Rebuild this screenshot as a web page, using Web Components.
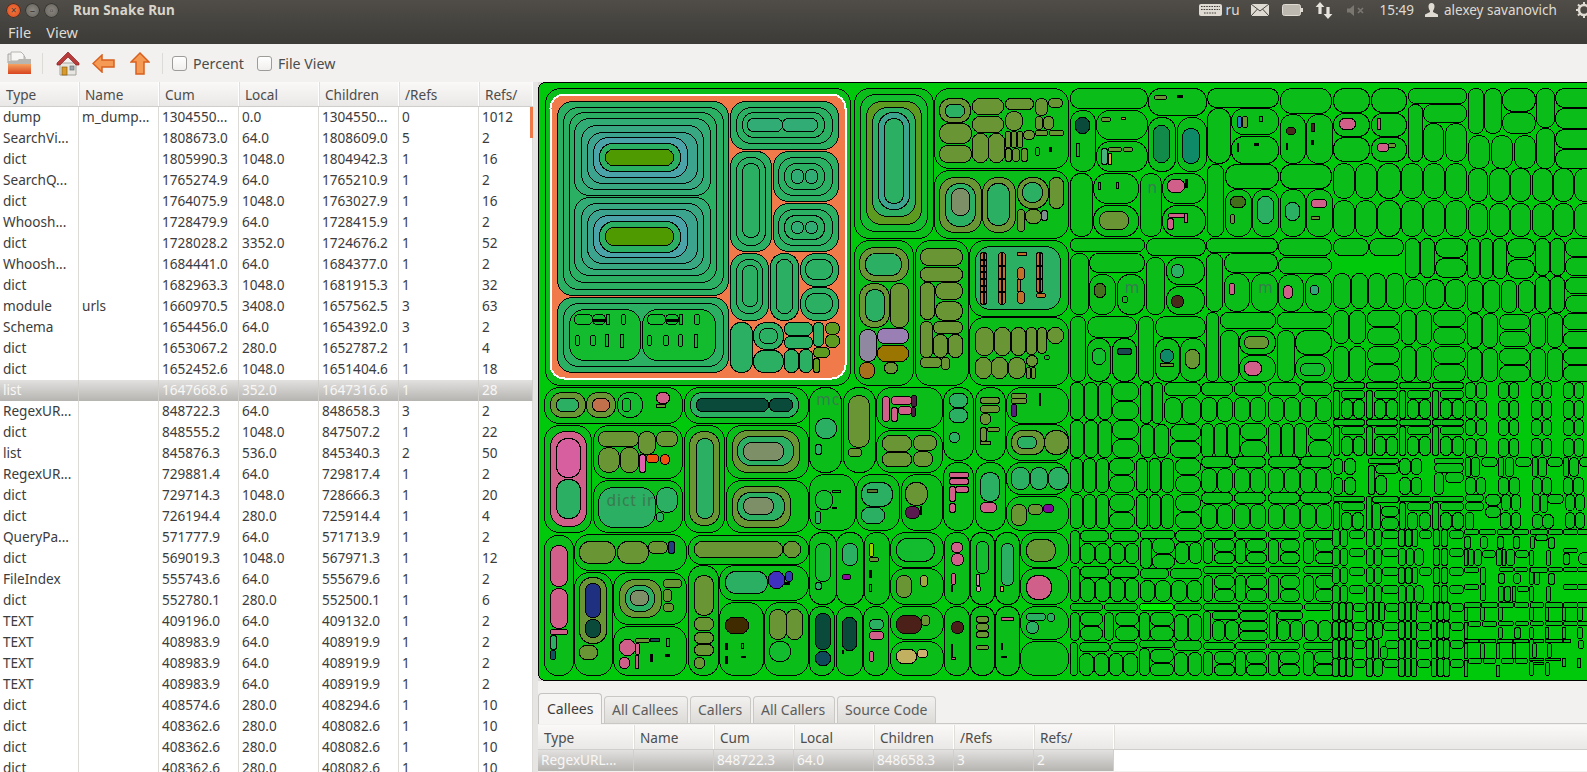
<!DOCTYPE html>
<html>
<head>
<meta charset="utf-8">
<title>Run Snake Run</title>
<style>
  html, body { margin: 0; height: 100%; overflow: hidden; background: #f2f1ef; }
  body { font-family: "Noto Sans", "Open Sans", sans-serif; display: flex; flex-direction: column; height: 772px; }
  .split { display: flex; flex: 1; min-height: 0; }
  .side { display: flex; flex-direction: column; flex: 1; min-width: 0; }
  .sash { flex: 0 0 5px; background: #e6e5e3; }
</style>
</head>
<body>
<top-bar></top-bar>
<tool-bar></tool-bar>
<div class="split">
  <snake-table id="main" style="width:533px" columns="79,80,80,80,80,80,54" indicator></snake-table>
  <div class="sash"></div>
  <div class="side">
    <square-map></square-map>
    <note-tabs>
      <snake-table id="callees" columns="96,80,80,80,80,80,80"></snake-table>
    </note-tabs>
  </div>
</div>

<script>
const HEAD = ["Type", "Name", "Cum", "Local", "Children", "/Refs", "Refs/"];

const MAIN_ROWS = `dump|m_dump...|1304550...|0.0|1304550...|0|1012
SearchVi...||1808673.0|64.0|1808609.0|5|2
dict||1805990.3|1048.0|1804942.3|1|16
SearchQ...||1765274.9|64.0|1765210.9|1|2
dict||1764075.9|1048.0|1763027.9|1|16
Whoosh...||1728479.9|64.0|1728415.9|1|2
dict||1728028.2|3352.0|1724676.2|1|52
Whoosh...||1684441.0|64.0|1684377.0|1|2
dict||1682963.3|1048.0|1681915.3|1|32
module|urls|1660970.5|3408.0|1657562.5|3|63
Schema||1654456.0|64.0|1654392.0|3|2
dict||1653067.2|280.0|1652787.2|1|4
dict||1652452.6|1048.0|1651404.6|1|18
list||1647668.6|352.0|1647316.6|1|28
RegexUR...||848722.3|64.0|848658.3|3|2
dict||848555.2|1048.0|847507.2|1|22
list||845876.3|536.0|845340.3|2|50
RegexUR...||729881.4|64.0|729817.4|1|2
dict||729714.3|1048.0|728666.3|1|20
dict||726194.4|280.0|725914.4|1|4
QueryPa...||571777.9|64.0|571713.9|1|2
dict||569019.3|1048.0|567971.3|1|12
FileIndex||555743.6|64.0|555679.6|1|2
dict||552780.1|280.0|552500.1|1|6
TEXT||409196.0|64.0|409132.0|1|2
TEXT||408983.9|64.0|408919.9|1|2
TEXT||408983.9|64.0|408919.9|1|2
TEXT||408983.9|64.0|408919.9|1|2
dict||408574.6|280.0|408294.6|1|10
dict||408362.6|280.0|408082.6|1|10
dict||408362.6|280.0|408082.6|1|10
dict||408362.6|280.0|408082.6|1|10`;

class TopBar extends HTMLElement {
  constructor() {
    super();
    this.attachShadow({ mode: "open" }).innerHTML = `
      <style>
        :host { display: block; height: 44px; flex: none; background: linear-gradient(#504d48, #3c3b37); color: #dfdbd2; font-size: 14px; }
        .title { display: flex; align-items: center; height: 20px; padding-left: 6px; }
        .btn { width: 15px; height: 15px; border-radius: 50%; margin-right: 4px; display: flex; align-items: center; justify-content: center; font-size: 10px; line-height: 1; color: #3c3b37; background: radial-gradient(#8b8882, #5f5c56); box-shadow: inset 0 0 0 1px #35342f; }
        .btn.close { background: radial-gradient(#f47a3e, #d8431d); }
        .name { font-weight: 700; font-size: 13.5px; margin-left: 10px; letter-spacing: .1px; color: #d8d4cb; }
        .status { margin-left: auto; display: flex; align-items: center; height: 20px; font-size: 13.5px; color: #dfdbd2; }
        .status svg { display: block; flex: none; }
        .menu { display: flex; height: 24px; align-items: center; padding-left: 8px; gap: 15px; font-size: 14.5px; }
      </style>
      <div class="title">
        <span class="btn close">×</span><span class="btn">–</span><span class="btn">▫</span>
        <span class="name">Run Snake Run</span>
        <div class="status">
          <svg width="23" height="12" viewBox="0 0 23 12"><rect width="23" height="12" rx="2" fill="#dfdbd2"/><path d="M2 2.5h19M2 5.5h19M5 9h13" stroke="#3f3d39" stroke-width="1.2" stroke-dasharray="1.6 1"/></svg>
          <span style="margin:0 12px 0 4px">ru</span>
          <svg width="18" height="12" viewBox="0 0 18 12"><rect width="18" height="12" fill="#dfdbd2"/><path d="M0 0l9 7 9-7M0 12l6.5-7M18 12l-6.5-7" fill="none" stroke="#4a4843" stroke-width="1"/></svg>
          <svg style="margin-left:13px" width="21" height="12" viewBox="0 0 21 12"><rect x=".5" y=".5" width="18" height="11" rx="2" fill="#bdb9b0" stroke="#dfdbd2"/><rect x="19" y="4" width="2" height="4" fill="#dfdbd2"/></svg>
          <svg style="margin-left:12px" width="18" height="17" viewBox="0 0 18 17"><path d="M5 0l4.4 5H6.6v7H3.4V5H.6zM13 17l-4.4-5h2.8V5h3.2v7h2.8z" fill="#e6e3dc"/></svg>
          <svg style="margin-left:14px" width="18" height="11" viewBox="0 0 18 11"><path d="M0 3.5h3L7 0v11L3 7.500H0z" fill="#7a7771"/><path d="M11 3l5 5M16 3l-5 5" stroke="#7a7771" stroke-width="1.6"/></svg>
          <span style="margin-left:14px">15:49</span>
          <svg style="margin-left:11px" width="13" height="14" viewBox="0 0 13 14"><path d="M6.5 0c2 0 3 1.5 3 3.5S8.400 7 8 8v1l5 2.500V14H0v-2.500L5 9V8C4.600 7 3.500 5.500 3.500 3.500S4.500 0 6.500 0z" fill="#dfdbd2"/></svg>
          <span style="margin-left:6px;width:132px">alexey savanovich</span>
          <svg width="11" height="16" viewBox="0 0 11 16"><circle cx="8" cy="8" r="5" fill="none" stroke="#dfdbd2" stroke-width="2.600"/><path d="M8 0v3M8 13v3M0 8h3M2 2.500l2 2M2 13.500l2-2" stroke="#dfdbd2" stroke-width="2"/></svg>
        </div>
      </div>
      <div class="menu"><span>File</span><span>View</span></div>`;
  }
}
customElements.define("top-bar", TopBar);

class ToolBar extends HTMLElement {
  constructor() {
    super();
    this.attachShadow({ mode: "open" }).innerHTML = `
      <style>
        :host { display: flex; align-items: center; height: 38px; flex: none; background: #f2f1ef; color: #4c4c4c; font-size: 14.2px; }
        svg { display: block; flex: none; }
        .sep { width: 1px; height: 21px; background: #dcdbd8; flex: none; }
        .chk { width: 13px; height: 13px; border: 1px solid #9d9c99; border-radius: 3px; background: linear-gradient(#fff, #f0efed); flex: none; }
      </style>
      <svg style="margin-left:7px" width="25" height="24" viewBox="0 0 25 24">
        <path d="M1 3h14l3 3v6H1z" fill="#e6e5e2" stroke="#a5a4a0"/><path d="M4 1h10l3 3v6H4z" fill="#f7f6f4" stroke="#b5b4b0"/>
        <path d="M1 10h9l2-2h12v15H1z" fill="#b8b6b1"/><path d="M1 13h23v10H1z" fill="url(#fo)"/>
        <defs><linearGradient id="fo" x2="0" y2="1"><stop offset="0" stop-color="#f5a262"/><stop offset="1" stop-color="#d8431d"/></linearGradient></defs>
      </svg>
      <div class="sep" style="margin-left:10px"></div>
      <svg style="margin-left:13px" width="24" height="25" viewBox="0 0 24 25">
        <path d="M4 12h16v12H4z" fill="#e8e6e1" stroke="#a5a39d"/><rect x="6" y="16" width="5" height="8" fill="#d99a2b" stroke="#8a5d12" stroke-width=".7"/><rect x="14" y="15" width="4" height="4" fill="#9ba3ac" stroke="#6b6f73" stroke-width=".7"/>
        <path d="M12 1L1 12v2h3l8-8 8 8h3v-2z" fill="#b83a3a" stroke="#8c2323" stroke-width=".7"/>
      </svg>
      <svg style="margin-left:12px" width="23" height="19" viewBox="0 0 23 19"><path d="M10 1L1 9.500 10 18v-5h12V6H10z" fill="#f49a54" stroke="#d8601f" stroke-width="1.500"/></svg>
      <svg style="margin-left:15px" width="20" height="23" viewBox="0 0 20 23"><path d="M10 1L1 10h5v12h8V10h5z" fill="#f49a54" stroke="#d8601f" stroke-width="1.500"/></svg>
      <div class="sep" style="margin-left:12px"></div>
      <div class="chk" style="margin-left:9px"></div>
      <span style="margin-left:6px">Percent</span>
      <div class="chk" style="margin-left:13px"></div>
      <span style="margin-left:6px">File View</span>`;
  }
}
customElements.define("tool-bar", ToolBar);

class SnakeTable extends HTMLElement {
  constructor() {
    super();
    this.attachShadow({ mode: "open" });
  }
  connectedCallback() {
    const cols = this.getAttribute("columns").split(",").map((w) => w + "px").join(" ");
    const rows = this.rows || [];
    const cells = (row) => row.map((t) => `<div class="c">${t}</div>`).join("");
    this.shadowRoot.innerHTML = `
      <style>
        :host { display: block; position: relative; overflow: hidden; background: #fff; color: #3c3c3c; font-size: 13.6px; flex: none; }
        .r { display: grid; grid-template-columns: ${cols}; height: 21px; line-height: 20px; width: max-content; }
        .c { padding-left: 3px; border-right: 1px solid #dcdbd8; white-space: nowrap; overflow: hidden; }
        .h { height: 24px; line-height: 25px; width: 100%; background: linear-gradient(#faf9f8, #e9e8e6); border-bottom: 1px solid #cfcecb; color: #4c4c4c; }
        .h .c { padding-left: 6px; border-right: 1px solid #fff; box-shadow: 1px 0 0 #e0dfdc; }
        .s { background: linear-gradient(#e2e1df, #b6b4b1); color: #f8f7f5; }
        .s .c { border-right-color: #d0cfcc; }
        .bar { position: absolute; right: 0; top: 25px; width: 3px; height: 31px; background: #f07746; }
      </style>
      <div class="r h">${cells(HEAD)}</div>
      ${rows.map((r, i) => `<div class="r ${this.selected === i ? "s" : ""}">${cells(r)}</div>`).join("")}
      ${this.hasAttribute("indicator") ? '<div class="bar"></div>' : ""}`;
  }
}

class NoteTabs extends HTMLElement {
  constructor() {
    super();
    this.attachShadow({ mode: "open" }).innerHTML = `
      <style>
        :host { display: block; flex: 1; min-height: 0; padding-top: 11px; background: #f2f1ef; overflow: hidden; color: #5c5c5c; font-size: 14px; }
        .tabs { display: flex; height: 31px; gap: 2px; align-items: flex-end; }
        .t { height: 27px; line-height: 25px; padding: 0 7px; box-sizing: border-box; border: 1px solid #c9c8c5; border-bottom: 0; border-radius: 4px 4px 0 0; background: linear-gradient(#f2f1ef, #dcdbd8); white-space: nowrap; }
        .t.on { height: 31px; line-height: 29px; width: 64px; background: #f6f5f4; color: #3c3c3c; padding: 0 8px; position: relative; top: 1px; border-color: #c4c3c0; }
        .body { border-top: 1px solid #c9c8c5; padding-top: 1px; }
      </style>
      <div class="tabs">
        <div class="t on">Callees</div>
        <div class="t" style="width:84px">All Callees</div>
        <div class="t" style="width:61px">Callers</div>
        <div class="t" style="width:82px">All Callers</div>
        <div class="t" style="width:99px">Source Code</div>
      </div>
      <div class="body"><slot></slot></div>`;
  }
}
customElements.define("note-tabs", NoteTabs);

// colours of the map, by short name
const COL = {
  G: "#0abd19", I: "#13bb2f", T: "#2baf62", O: "#6a9534", P: "#d0608a", D: "#0a4a3a", K: "#000", N: "none",
  L3: "#30ac74", L4: "#38a882", L5: "#3ca48e", L6: "#4aa3a8", LG: "#4f9a00", GY: "#7d8f66", BO: "#5d9b20",
  BR: "#4a2a1a", OR: "#c0702a", YO: "#f0a030", PU: "#900aa0", VI: "#9a7fb5", HI: "#00f000"
};

// zoom crops the shapes were read from: origin and scale
const Z3 = [530, 80, 3, 3], Z4 = [840, 80, 3, 3], Z5 = [1050, 80, 2.92, 3],
  Z6 = [530, 375, 2.958, 3], Z7 = [530, 520, 2.958, 3], Z8 = [1050, 375, 2.92, 3],
  ZA = [1330, 375, 3, 3], ZB = [1330, 525, 3, 3];

const S3 = `45 25 960 915 G;80 62 595 645 T;98 80 578 627 T;116 97 558 606 T;
133 115 540 346 L3;152 136 520 328 L4;170 155 500 310 L5;188 172 470 292 L6;206 190 450 274 T;224 208 428 256 LG;
133 350 540 586 L3;152 370 520 568 L4;170 388 500 550 L5;188 406 470 532 L6;206 424 450 515 T;224 442 428 496 LG;
600 62 925 208 T;617 80 905 188 T;635 97 882 170 T;652 115 755 152 L3;757 115 862 152 L3;
600 212 722 514 T;617 232 705 494 T;635 250 688 470 T;
728 212 925 364 T;745 232 905 345 T;762 250 882 327 T;782 268 820 310 L3;824 268 862 310 L3;
728 368 925 514 T;745 387 905 495 T;762 405 882 478 T;782 423 820 460 L3;824 423 862 460 L3;
600 518 715 720 T;617 536 697 700 T;635 555 680 677 T;720 518 805 720 T;738 536 787 700 T;
810 518 925 618 T;826 536 905 598 T;810 622 925 720 T;826 640 905 700 T;
80 650 595 877 T;98 668 578 858 T;116 686 330 840 I;336 686 554 840 I;
133 702 185 732 I;187 702 225 733 I;187 717 225 722 K;227 702 236 733 I;274 702 284 731 I;134 765 146 794 I;181 765 195 794 I;226 762 233 797 I;271 762 278 800 I;
352 702 404 732 I;406 702 444 733 I;406 717 444 722 K;446 702 455 733 I;493 702 506 731 I;352 765 364 794 I;400 765 414 794 I;445 762 455 797 I;492 762 500 800 I;
600 725 665 877 T;668 725 760 806 T;686 743 740 788 T;668 811 760 877 T;763 725 845 765 T;763 769 845 803 T;848 725 880 798 T;
884 725 926 761 BO;884 763 926 800 BO;763 806 803 877 T;806 806 846 877 T;848 802 896 830 BO;848 834 868 877 BO`;

const S4 = `42 25 278 475 G;60 42 260 452 I;77 62 242 432 BO;95 80 225 408 T;113 97 206 388 L5;131 115 188 368 T;
282 25 685 265 G;298 55 390 125 O;316 72 371 110 T;298 130 392 190 O;298 194 392 245 O;395 55 490 103 O;395 107 490 155 O;395 158 443 245 O;445 158 492 245 O;
494 55 580 88 O;494 92 545 150 O;584 55 620 105 O;624 55 667 80 O;494 152 510 200 O;512 152 528 200 O;530 152 546 200 O;548 150 582 176 O;586 150 622 166 O;626 150 668 164 O;584 108 606 148 O;610 108 638 148 O;
494 204 513 244 O;516 204 538 244 O;542 204 560 244 O;586 202 596 226 N;628 202 632 212 K;
282 270 685 475 G;298 290 422 455 O;316 308 404 438 T;334 325 386 405 GY;425 290 526 455 O;442 308 508 434 T;530 290 625 385 O;547 307 605 365 T;628 290 668 385 O;530 388 553 454 O;556 388 602 428 O;604 390 620 420 #7f8f8f;
42 480 220 915 G;58 502 204 604 O;76 520 182 586 T;58 608 147 740 O;76 626 132 722 T;151 608 204 742 O;58 746 108 842 #9088a0;112 745 204 790 VI;112 794 204 842 #9a7600;58 846 102 895 #a86f1c;133 845 170 878 O;
224 480 383 915 G;241 505 365 555 O;241 560 365 602 O;241 606 282 718 O;284 606 365 658 O;284 662 365 720 O;241 722 275 830 O;278 722 365 758 O;278 762 320 830 O;323 762 365 830 O;241 832 302 862 O;304 832 326 866 O;
387 480 685 708 G;404 497 660 688 T;
420 517 437 671 OR;475 517 494 671 OR;532 517 557 526 OR;532 560 552 596 OR;532 598 539 632 OR;532 634 552 670 OR;589 517 606 636 OR;589 638 614 650 OR;
420 536 437 537 K;420 555 437 556 K;420 574 437 575 K;420 595 437 596 K;420 614 437 615 K;420 634 437 635 K;475 555 494 556 K;475 595 494 596 K;475 634 494 635 K;589 555 606 556 K;589 595 606 596 K;
428 517 429 671 K;484 517 485 671 K;597 517 598 636 K;
387 712 685 915 G;404 742 460 826 O;462 742 510 826 O;512 742 555 826 O;557 742 588 822 O;590 742 618 820 O;620 742 668 788 O;404 830 452 895 O;454 830 502 895 O;505 830 555 895 O;557 824 590 858 O;558 860 570 895 O;572 860 584 895 O;612 824 626 838 N`;

const S5 = `57 25 282 85;285 25 455 105;457 25 667 80;672 25 820 98;826 25 932 95;936 25 1040 95;1044 25 1216 68;1220 25 1265 160;1268 25 1316 160;1319 25 1417 92;1319 95 1417 160;1420 25 1472 140;1476 25 1590 82;1476 85 1590 143;1476 146 1590 203;1476 206 1590 263;
57 90 130 273;134 90 282 178;134 182 282 273;285 110 366 273;370 110 455 273;457 84 525 250;528 84 667 163;528 167 667 250;672 102 744 250;748 102 822 250;826 98 932 168;826 172 932 244;936 98 1040 168;936 172 1040 244;1044 72 1085 244;1088 72 1216 126;1088 130 1148 244;1152 130 1216 244;1220 165 1283 263;1287 165 1350 263;1354 165 1416 263;1420 145 1472 263;
74 110 113 160 D;75 190 84 227 N;150 112 176 124 O;208 112 220 118 #d09030;150 203 166 252 #4ab080;168 218 178 252 YO;168 202 208 214 O;212 202 238 214 O;
303 45 338 58 O;372 44 384 50 K;302 135 348 247 #128a4a;386 143 436 250 #0f8a68;545 107 558 142 #2f80c0;562 107 576 142 O;611 107 620 124 N;545 190 548 212 K;597 190 606 195 K;
688 142 716 163 BR;763 128 772 152 #4a2020;688 190 691 208 N;763 180 767 193 K;843 115 890 148 P;954 115 965 148 P;954 190 986 212 P;988 190 1008 200 O;
57 278 122 468;126 278 258 370;126 374 258 468;262 278 324 468;328 278 454 370;328 374 454 468;457 253 506 468;511 253 667 323;672 253 820 323;511 327 586 468;590 327 667 468;672 327 744 468;748 327 822 468;
826 248 888 355;891 248 953 355;956 248 1021 355;1024 248 1086 355;1089 248 1151 355;1154 248 1216 355;826 360 888 468;891 360 953 468;956 360 1021 468;1024 360 1086 468;1089 360 1151 468;1154 360 1216 468;
1220 265 1277 363;1281 265 1339 363;1343 265 1403 363;1406 265 1465 363;1469 265 1526 363;1530 265 1590 363;1220 368 1277 468;1281 368 1339 468;1343 368 1403 468;1406 368 1465 468;1469 368 1526 468;1530 368 1590 468;
140 305 146 328 N;194 305 199 325 N;142 392 228 448 O;343 298 392 335 P;393 298 400 322 K;345 398 390 410 P;392 398 399 425 P;343 414 358 448 P;527 347 568 382 #42701a;527 403 538 430 O;605 347 650 428 T;687 367 726 420 T;763 358 805 382 P;763 408 785 418 O;
57 473 275 514;280 473 452 526;456 473 662 516;666 473 820 526;826 473 928 524;931 473 1032 524;1037 473 1077 592;1079 473 1120 592;1124 473 1214 530;1124 533 1214 592;1218 473 1252 595;1255 473 1290 595;1293 473 1331 595;1334 473 1412 532;1334 536 1412 595;1416 473 1456 585;1460 473 1500 585;1504 473 1590 528;1504 531 1590 585;
57 518 110 702;113 518 275 577;113 582 191 702;196 582 275 702;280 530 334 702;338 530 450 613;338 617 450 702;456 518 503 694;508 518 662 575;508 578 582 694;586 578 662 694;666 530 820 580;666 583 740 694;744 583 820 694;
826 580 875 685;878 580 926 685;930 580 978 685;982 580 1032 685;1037 596 1090 685;1094 596 1150 685;1154 596 1213 685;1218 600 1260 697;1264 600 1312 697;1316 600 1362 697;1366 600 1412 697;1416 588 1456 697;1460 588 1500 697;1504 590 1590 640;1504 644 1590 697;
128 610 160 652 #45701f;210 648 224 665 N;354 553 387 592 T;354 646 387 682 BR;524 608 538 642 P;681 614 708 654 P;760 614 784 643 #2fa878;
57 707 103 902;107 707 252 770;107 774 176 902;180 774 252 902;256 707 302 902;306 707 452 770;306 774 376 902;380 774 452 902;456 697 492 902;496 697 658 745;662 697 820 745;496 750 548 902;552 750 658 822;552 826 658 902;662 750 712 902;716 750 820 822;716 826 820 902;
567 767 638 803 O;566 844 615 884 P;730 848 800 884 I;123 805 160 851 I;197 805 236 822 #1a4a50;322 806 358 845 #0f8a68;322 848 358 857 O;395 806 434 865 O;
826 690 870 790;874 690 920 790;926 690 1020 738;926 742 1020 792;1024 690 1066 792;1070 690 1112 792;1117 690 1212 738;1117 742 1212 792;1218 700 1258 800;1262 700 1306 800;1312 702 1398 748;1312 752 1398 798;1402 700 1446 800;1450 700 1494 800;1498 700 1590 748;1498 752 1590 800;
826 797 870 902;874 797 920 902;926 797 1020 848;926 852 1020 902;1024 797 1066 902;1070 797 1112 902;1117 797 1212 848;1117 852 1212 902;1218 805 1258 902;1262 805 1306 902;1312 803 1398 852;1312 856 1398 902;1402 805 1446 902;1450 805 1494 902;1498 805 1590 852;1498 856 1590 902`;

const S6 = `42 35 450 145;60 52 162 125 O;78 70 142 107 T;165 52 252 125 O;183 70 233 107 #c0704a;256 52 332 125 I;272 70 296 107 N;372 52 412 84 P;372 88 400 97 O;
456 35 822 145;472 52 794 125 T;490 70 705 107 D;708 70 775 107 D;
824 35 920 292;842 130 904 188 T;842 208 862 238 T;925 35 1020 292;942 60 1002 215 O;942 218 978 242 O;
1024 35 1218 160;1040 62 1062 138 P;1068 62 1128 88 P;1068 95 1085 138 P;1088 92 1126 116 P;1128 60 1142 92 #4a2040;1128 95 1138 122 #4a2040;
1024 165 1218 292;1040 180 1128 228 O;1132 180 1200 224 O;1040 232 1128 272 O;1132 228 1188 272 O;
1222 35 1310 255;1238 55 1292 96 T;1238 100 1292 142 T;1238 170 1268 202 T;
1315 35 1405 255;1330 65 1388 84 O;1330 90 1388 110 O;1330 113 1360 148 O;1330 155 1350 197 O;1352 155 1388 168 O;1330 198 1360 206 O;
1408 35 1591 143;1423 55 1466 68 O;1423 70 1466 84 O;1423 86 1437 122 #5a2080;1505 55 1509 90 K;
1408 148 1591 256;1424 166 1520 236 O;1442 182 1497 220 T;1520 166 1591 236 O;
42 150 180 472;60 167 165 453 P;78 188 147 306 #d85f9f;78 312 147 430 T;
186 150 450 310;202 168 318 212 O;320 168 370 236 O;372 168 434 212 O;202 215 262 290 O;265 215 320 290 O;322 238 340 290 #e060b0;342 238 380 262 #f05010;384 238 412 266 #f05010;
186 316 450 472;202 336 370 455 T;372 336 434 410 T;372 412 392 438 T;
456 150 575 472;470 168 558 450 O;490 188 540 428 T;
580 150 822 310;597 166 795 290 O;613 184 777 270 T;630 202 748 254 GY;
580 315 822 472;597 332 768 455 O;613 350 750 435 T;630 367 718 418 GY;
824 296 960 465;842 346 892 402 I;892 346 916 352 N;892 397 906 400 K;842 407 857 445 T;
964 296 1092 465;980 322 1072 394 T;998 343 1026 352 #5d7a30;980 396 1048 445 T;
1096 296 1218 465;1110 320 1174 390 O;1110 394 1152 430 #5a1a50;1154 394 1158 418 K;
1222 260 1310 465;1238 290 1295 305 P;1238 310 1295 327 P;1258 332 1295 352 P;1238 332 1256 378 P;1238 384 1256 412 P;
1315 260 1405 465;1332 292 1388 378 T;1332 382 1378 412 P;
1408 260 1591 358;1424 276 1477 342 T;1480 276 1530 342 T;1532 276 1591 342 T;
1408 363 1591 465;1424 388 1468 450 O;1472 388 1514 418 O;1516 388 1548 412 #800a98`;

const S7 = `42 45 127 465;60 76 108 198 P;60 203 108 325 P;60 328 108 342 P;60 345 76 388 T;60 390 74 418 #0f5560;
130 42 462 150;146 64 252 128 O;256 64 348 128 O;350 64 406 100 O;408 64 426 98 #204080;
130 155 242 465;146 172 225 370 O;164 190 206 292 #203080;164 296 206 352 D;146 374 198 416 O;
246 155 462 312;262 176 388 292 O;280 194 368 274 T;297 211 348 256 GY;392 176 446 202 O;392 206 418 244 O;392 248 422 272 O;
246 318 462 465;262 356 310 406 P;262 410 292 445 P;312 355 352 365 O;354 355 382 362 #1a4a50;312 368 322 402 P;312 405 320 445 P;403 355 410 378 N;356 402 360 422 K;400 402 410 407 K;
466 45 822 132;484 62 745 110 O;748 62 798 110 O;
466 136 556 465;484 166 540 285 O;484 290 540 330 O;484 335 540 368 O;484 372 540 406 O;484 410 514 445 O;
560 136 822 240;578 154 700 220 T;703 154 752 205 #4030c0;755 154 774 184 #303cb0;752 185 765 191 K;
560 245 688 465;578 292 645 338 #402a00;578 370 582 388 K;625 370 630 385 N;578 408 582 428 K;625 408 636 412 N;
692 245 822 465;708 268 756 358 O;758 268 804 358 O;708 362 768 422 I;
824 35 904 253;842 68 888 182 I;842 186 862 208 T;906 35 984 253;924 68 966 135 T;924 162 946 176 PU;
988 35 1062 253;1004 68 1016 108 #a0d000;1004 110 1028 124 O;1004 150 1008 170 K;1004 192 1008 212 N;
1066 35 1222 140;1084 55 1196 122 I;1066 145 1222 253;1084 166 1126 232 O;1154 166 1174 198 #a0a840;
1226 35 1298 253;1244 66 1278 96 P;1244 100 1280 136 P;1244 158 1256 192 P;1244 196 1248 214 K;
1302 35 1372 253;1318 62 1354 158 I;1318 162 1328 194 #d09aa0;1318 198 1332 214 #e0a0b0;
1376 35 1446 253;1392 70 1428 196 T;1390 198 1398 214 YO;
1450 35 1591 140;1466 58 1552 122 O;1450 145 1591 253;1466 164 1540 236 P;
824 258 900 465;842 278 886 388 D;842 392 886 434 #0f4a5a;904 258 982 465;922 290 964 390 D;922 390 926 400 K;
986 258 1060 465;1002 298 1044 328 T;1002 332 1044 358 P;1002 392 1016 422 P;
1064 258 1222 358;1082 284 1156 338 #4a2018;1158 284 1180 314 O;1064 362 1222 465;1082 386 1142 428 #c0b060;1144 386 1174 410 #d0b070;
1226 258 1298 465;1244 302 1280 338 #4a2018;1244 372 1248 410 K;1244 412 1258 418 P;
1302 258 1372 465;1318 288 1354 306 O;1318 310 1354 330 O;1318 332 1354 352 O;1318 374 1354 386 O;
1376 258 1446 465;1392 292 1428 300 P;1392 370 1396 386 K;1392 408 1408 412 N;
1450 258 1591 358;1466 278 1524 300 T;1528 278 1550 304 T;1466 304 1502 338 T;1450 362 1591 465`;

// the right end of the dense area, read cell by cell from two closer crops
const SA = `8 248 36 298;42 248 76 298;8 305 36 358;42 305 76 358;115 248 204 265;115 270 132 358;135 268 204 295;135 300 168 358;
208 248 240 298;242 248 274 298;208 305 240 358;242 305 274 358;313 248 400 263;313 265 400 290;313 292 340 358;345 292 400 322;
405 245 420 303;423 245 448 303;452 245 500 272;505 245 520 303;525 245 550 303;555 245 602 272;605 245 620 303;623 245 648 303;650 245 695 272;698 245 714 303;718 245 745 303;748 245 790 272;
405 306 435 358;438 306 465 358;505 306 535 358;538 306 568 358;605 306 632 358;635 306 662 358;698 306 726 358;730 306 760 358;
8 362 102 378;8 382 28 462;32 382 102 405;32 410 62 462;66 410 100 462;107 362 122 462;127 362 204 382;127 385 150 462;152 392 204 422;152 425 204 462;
206 362 300 378;206 382 226 462;230 382 300 405;230 410 262 462;266 410 300 462;305 362 400 378;305 382 325 462;330 382 400 405;330 410 362 462;366 410 400 462;
405 358 460 378;405 382 460 405;465 358 510 390;465 392 510 425;405 410 430 462;512 358 540 405;543 358 570 405;510 412 540 460;543 412 570 460;
605 358 628 412;630 358 650 412;652 358 700 385;605 418 635 460;637 418 668 460;705 358 733 405;736 358 762 405;705 412 733 460;736 412 762 460`;

const SB = `402 12 445 28;448 12 495 28;500 12 545 28;548 12 595 28;600 12 650 28;655 12 695 28;700 12 740 28;742 12 790 28;
402 32 420 68;450 32 470 68;500 32 520 68;548 32 568 68;600 32 612 68;615 28 650 45;655 35 672 68;
402 72 412 120;415 72 428 120;432 72 452 120;455 75 495 95;498 72 512 120;515 72 525 120;528 72 552 120;555 75 595 95;598 75 610 120;648 75 660 120;700 68 740 80;700 85 718 118;745 82 790 118;
402 125 445 140;450 125 465 175;508 125 550 138;553 125 590 138;598 125 610 178;600 125 650 140;655 125 695 138;505 145 522 175;550 145 570 175;612 142 628 178;655 145 672 178;700 125 740 138;742 125 790 138;
402 178 445 192;450 178 465 225;505 182 520 228;522 182 540 228;545 182 555 228;560 182 595 198;598 182 610 228;648 182 660 228;700 178 740 192;742 178 790 192;
402 232 450 245;452 232 500 245;503 232 550 245;553 232 595 245;600 232 640 245;645 232 695 245;698 232 740 245;742 232 790 245;
402 245 412 285;450 245 462 285;503 245 515 285;598 245 608 285;645 245 655 285;695 245 705 285;742 245 755 285;
415 288 450 303;455 288 498 303;503 288 550 300;555 288 595 300;600 288 640 300;645 288 695 300;698 288 740 300;742 288 790 300;
402 290 412 340;503 305 515 340;553 305 570 340;598 305 608 340;645 305 655 340;695 305 705 340;742 305 755 340;
402 343 445 352;448 343 495 352;500 343 545 352;548 343 595 352;600 343 640 352;645 343 695 352;698 343 720 352;745 345 760 368;
402 355 412 398;450 355 462 398;498 355 508 398;545 355 555 398;598 342 608 398;605 355 618 395;650 355 662 395;
415 400 452 415;458 400 495 415;512 400 550 415;555 400 590 415;598 398 640 405;645 398 690 405;695 398 705 422;742 398 750 425;
402 405 412 452;498 420 508 452;598 408 610 450;610 410 640 418;645 410 658 450`;

// helpers that spread a run of cells inside a span of the crop
function hs(out, x0, x1, y0, y1, n, gap = 3) {
  const w = (x1 - x0 - gap * (n - 1)) / n;
  for (let i = 0; i < n; i++) out.push([x0 + i * (w + gap), y0, x0 + i * (w + gap) + w, y1, "G"]);
}
function vs(out, x0, x1, y0, y1, n, gap = 3) {
  const h = (y1 - y0 - gap * (n - 1)) / n;
  for (let i = 0; i < n; i++) out.push([x0, y0 + i * (h + gap), x1, y0 + i * (h + gap) + h, "G"]);
}
function one(out, x0, y0, x1, y1, c = "G") { out.push([x0, y0, x1, y1, c]); }

function denseLeft() {
  const o = [];
  const BL = [440, 537, 636, 730];
  hs(o, 57, 178, 22, 132, 3); vs(o, 181, 258, 22, 132, 2); hs(o, 262, 328, 22, 145, 2); one(o, 332, 22, 437, 60); hs(o, 332, 437, 65, 145, 2);
  for (const x of BL) { one(o, x, 22, x + 90, 60); hs(o, x, x + 90, 65, 138, 2); }
  hs(o, 57, 178, 135, 245, 3); vs(o, 181, 258, 135, 245, 2); hs(o, 262, 345, 148, 245, 2); vs(o, 350, 437, 148, 245, 2);
  hs(o, 440, 552, 143, 245, 3); vs(o, 556, 632, 143, 245, 2); hs(o, 636, 748, 143, 245, 3); vs(o, 752, 820, 143, 245, 2);
  for (const [a, b] of [[248, 350], [356, 460]]) {
    hs(o, 57, 168, a, b, 3); vs(o, 172, 246, a, b, 2); hs(o, 250, 360, a, b, 3); vs(o, 365, 437, a, b, 2);
    for (const x of BL) { one(o, x, a - 6, x + 90, a + 27); hs(o, x, x + 90, a + 32, b, 2); }
  }
  for (const [a, b] of [[465, 565], [572, 678]]) {
    one(o, 57, a, 85, b); one(o, 88, a, 170, a + 33); one(o, 175, a, 258, a + 33); hs(o, 88, 258, a + 38, b, 4);
    for (const x of [446, 540, 638, 740]) { one(o, x, a, x + 90, a + 23); one(o, x, a + 28, x + 28, b); vs(o, x + 33, x + 90, a + 28, b, 2); }
  }
  one(o, 262, 465, 362, 490); one(o, 366, 465, 442, 497); one(o, 262, 490, 295, 578); vs(o, 298, 362, 490, 578, 2); hs(o, 366, 442, 500, 565, 2);
  one(o, 262, 580, 345, 610); one(o, 350, 580, 442, 610); hs(o, 262, 442, 615, 678, 4);
  one(o, 57, 683, 153, 706); one(o, 157, 683, 255, 706); one(o, 260, 683, 358, 706, "HI"); one(o, 363, 683, 442, 706);
  one(o, 57, 710, 85, 795); vs(o, 88, 153, 710, 795, 2); one(o, 157, 710, 185, 795); vs(o, 190, 258, 710, 795, 2); one(o, 260, 710, 290, 795); vs(o, 293, 360, 710, 795, 2); hs(o, 363, 442, 718, 795, 2);
  for (const [x, w] of [[446, 102], [552, 83], [640, 96], [742, 78]]) one(o, x, 685, x + w, 705);
  one(o, 446, 708, 468, 795); one(o, 472, 708, 548, 732); hs(o, 472, 548, 736, 795, 2); vs(o, 552, 635, 708, 795, 3); one(o, 640, 708, 660, 795); one(o, 664, 708, 736, 732); hs(o, 664, 736, 736, 795, 2); hs(o, 742, 820, 735, 795, 2);
  one(o, 57, 800, 80, 900); one(o, 84, 800, 172, 828); one(o, 175, 800, 255, 828); hs(o, 84, 255, 833, 900, 4);
  one(o, 260, 795, 358, 815); one(o, 363, 795, 442, 825); one(o, 260, 820, 290, 900); vs(o, 292, 358, 822, 900, 2); hs(o, 363, 442, 830, 900, 2);
  for (const x of [446, 540, 638, 740]) { one(o, x, 800, x + 90, 822); one(o, x, 828, x + 28, 900); vs(o, x + 32, x + 90, 828, 900, 2); }
  return o;
}

function denseA() {
  const o = [];
  for (const y of [22, 132]) for (const x of [8, 107, 206, 305]) {
    one(o, x, y, x + 94, y + 18); one(o, x, y + 22, x + 20, y + 108); one(o, x + 24, y + 22, x + 94, y + 46);
    hs(o, x + 24, x + 94, y + 50, y + 108, 2);
  }
  for (const x of [405, 503, 602, 698]) for (const [a, b] of [[22, 68], [75, 130], [132, 180], [188, 242]]) hs(o, x, x + 62, a, b, 2);
  return o;
}

function denseB() {
  const o = [];
  const tall = (xs, y0, y1) => xs.forEach(([a, b]) => one(o, a, y0, b, y1));
  for (const [a, b] of [[12, 62], [125, 175]]) {
    tall([[5, 28], [30, 52], [107, 128], [132, 152], [205, 222], [225, 242], [245, 262], [308, 328], [332, 352]], a, b);
    for (const x of [[56, 103], [156, 203], [266, 303], [356, 400]]) one(o, x[0], a + 2, x[1], a + 26);
  }
  for (const [a, b] of [[68, 120], [180, 232]]) {
    tall([[5, 28], [30, 52], [107, 128], [132, 152], [205, 225], [228, 248], [252, 278], [308, 328], [332, 352]], a, b);
    for (const x of [[56, 103], [156, 203], [356, 400]]) one(o, x[0], a, x[1], a + 24);
  }
  for (const [a, b] of [[232, 285], [343, 398]]) {
    tall([[5, 25], [28, 46], [48, 65], [108, 125], [128, 145], [205, 222], [225, 240], [243, 258], [302, 318], [322, 338], [340, 356]], a, b);
    for (const x of [[68, 105], [165, 203], [260, 300], [360, 400]]) one(o, x[0], a + 2, x[1], a + 26);
  }
  one(o, 148, 232, 162, 285); one(o, 150, 362, 172, 398);
  for (const [a, b] of [[288, 340], [400, 452]]) {
    tall([[5, 25], [28, 46], [48, 65], [108, 125], [130, 155], [205, 222], [225, 240], [243, 258], [302, 318], [322, 338], [340, 356]], a, b);
    for (const x of [[68, 105], [160, 203], [260, 300], [360, 400]]) one(o, x[0], a + 2, x[1], a + 26);
  }
  return o;
}

const LABELS = [
  ["dict ir", 226, 392, Z6], ["mc", 847, 90, Z6], ["n", 285, 338, Z5], ["m", 218, 640, Z5], ["m", 608, 638, Z5]
];

class SquareMap extends HTMLElement {
  constructor() {
    super();
    this.attachShadow({ mode: "open" }).innerHTML = `
      <style>
        :host { display: block; flex: none; height: 599px; background: #d9d8d6; font-size: 15px; }
        svg { display: block; }
        rect { stroke: #000; stroke-width: 1; shape-rendering: crispEdges; }
        text { fill: #3a7a50; font-family: "Noto Sans", sans-serif; font-size: 15.500px; letter-spacing: 1px; }
      </style>
      <svg id="map" width="1049" height="599" viewBox="538 82 1049 599" xmlns="http://www.w3.org/2000/svg"></svg>`;
  }
  connectedCallback() {
    const shapes = [];
    const add = (z, x0, y0, x1, y1, c) => {
      const a = Math.round(z[0] + x0 / z[2]), b = Math.round(z[1] + y0 / z[3]);
      const e = Math.max(a + 1, Math.round(z[0] + x1 / z[2])), f = Math.max(b + 1, Math.round(z[1] + y1 / z[3]));
      const r = Math.min(15, Math.min(e - a, f - b) * 0.46);
      const fill = COL[c] || c || COL.G;
      shapes.push(`<rect x="${a + 0.5}" y="${b + 0.5}" width="${e - a}" height="${f - b}" rx="${r.toFixed(1)}" fill="${fill}"/>`);
    };
    const parse = (z, text) => text.split(";").forEach((s) => {
      const p = s.trim().split(/\s+/);
      add(z, +p[0], +p[1], +p[2], +p[3], p[4]);
    });

    shapes.push(`<rect x="538.5" y="82.5" width="1060" height="598" rx="7" fill="#00c80a"/>`);
    parse(Z3, S3);
    // white frame of the selected box, with the orange ground inside it
    shapes.splice(2, 0, `<rect x="550.5" y="94.5" width="295" height="284" rx="14" fill="#f07a4a" style="stroke:#fff;stroke-width:2"/>`);
    parse(Z4, S4);
    parse(Z5, S5);
    parse(Z6, S6);
    parse(Z7, S7);
    denseLeft().forEach((c) => add(Z8, c[0], c[1], c[2], c[3], c[4]));
    denseA().forEach((c) => add(ZA, c[0], c[1], c[2], c[3], c[4]));
    parse(ZA, SA);
    denseB().forEach((c) => add(ZB, c[0], c[1], c[2], c[3], c[4]));
    parse(ZB, SB);
    const labels = LABELS.map(([t, x, y, z]) => `<text x="${z[0] + x / z[2]}" y="${z[1] + y / z[3]}">${t}</text>`);
    this.shadowRoot.getElementById("map").innerHTML = shapes.join("") + labels.join("");
  }
}
customElements.define("square-map", SquareMap);

const main = document.getElementById("main");
main.rows = MAIN_ROWS.split("\n").map((l) => l.split("|"));
main.selected = 13;
const callees = document.getElementById("callees");
callees.rows = [["RegexURL...", "", "848722.3", "64.0", "848658.3", "3", "2"]];
callees.selected = 0;
customElements.define("snake-table", SnakeTable);
</script>
</body>
</html>
